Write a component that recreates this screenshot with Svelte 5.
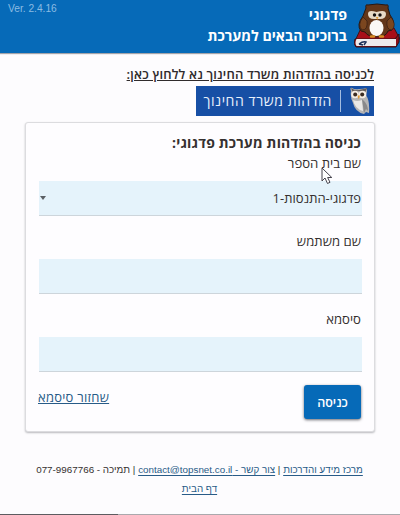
<script>
  let school = $state('פדגוגי-התנסות-1');
  let username = $state('');
  let password = $state('');
</script>

<div class="page" dir="rtl">
  <header>
    <svg class="owl" viewBox="0 0 46 46" width="46" height="46" aria-hidden="true">
      <path d="M7 25 40 25 46 36 1 38Z" fill="#a80f19" stroke="#39151a" />
      <path d="M1 36 41 36 45 31V39L42 44H2Q-1 41 1 36Z" fill="#8f1019" stroke="#311218" />
      <path d="M2.500 36H42V43H2.500Q.5 40 2.500 36Z" fill="#eeebed" />
      <path d="M5 41q4-3 7-2l-2 3M5 41l4 1" fill="none" stroke="#192e57" stroke-width="1.400" />
      <path d="M12 5Q11 1 14 2 23 0 32 2 35 1 34 5L36 12Q42 19 38 27L34 28Q32 34 23 34 14 34 11 29L7 28Q2 22 9 13Z" fill="#633619" stroke="#271712" />
      <path d="M9 14Q3 22 8 27 14 27 13 18ZM37 14Q43 22 38 27 32 27 33 18Z" fill="#7b461f" stroke="#351d13" stroke-width=".7" />
      <path d="M14 11Q14 6 22.500 9 32 6 32 11 32 16 26 16H20Q14 16 14 11Z" fill="#e8d9c7" />
      <ellipse cx="22.500" cy="25" rx="7" ry="8" fill="#faf8f5" />
      <circle cx="20.500" cy="12" r="1.700" fill="#151010" /><circle cx="26" cy="12" r="1.700" fill="#151010" />
      <path d="m22 14 1.200 3 1.200-3Z" fill="#df9a35" />
      <path d="M17 33.500h3M26 33.500h3" stroke="#d78b22" stroke-width="2.500" stroke-linecap="round" />
    </svg>
    <div class="titles">
      <span class="t1">פדגוגי</span>
      <span class="t2">ברוכים הבאים למערכת</span>
    </div>
    <span class="version" dir="ltr">Ver. 2.4.16</span>
  </header>

  <main>
    <a class="intro"><span>לכניסה בהזדהות משרד החינוך נא ללחוץ כאן:</span></a>
    <a class="banner">
      <svg viewBox="0 0 20 28" width="20" height="28" aria-hidden="true">
        <path d="M1 4Q-.5 0 2 1 5 3 9 2 14 2 16 1 18 3 16 8 20 14 19 26L16 25 14 27Q5 25 3 16 0 10 1 4Z" fill="#b6b5b5" />
        <path d="M1 1Q5 4 9 3 14 2 17 1L15 6 9 4 3 6Z" fill="#645d5a" />
        <path d="M3 13Q7 15 12 13L13 24Q5 22 3 13Z" fill="#eae8e6" />
        <path d="M12 12Q18 17 18 24L16 22 14 26Z" fill="#89898b" />
        <circle cx="5" cy="7.500" r="3.800" fill="#f7eee4" /><circle cx="12.500" cy="7.500" r="3.800" fill="#f7eee4" />
        <circle cx="5.200" cy="7.500" r="2" fill="#3b2c22" /><circle cx="12.200" cy="7.500" r="2" fill="#3b2c22" />
        <path d="m7.500 8.500 1.200 4L10 8.500Z" fill="#e49a2e" />
      </svg>
      <i></i>
      <span class="btext">הזדהות משרד החינוך</span>
    </a>

    <form class="card">
      <h2><span>כניסה בהזדהות מערכת פדגוגי:</span></h2>
      <div class="label first"><span>שם בית הספר</span></div>
      <div class="field select"><span>{school}</span><b></b></div>
      <div class="label"><span>שם משתמש</span></div>
      <input class="field" type="text" bind:value={username} />
      <div class="label"><span>סיסמא</span></div>
      <input class="field" type="password" bind:value={password} />
      <div class="actions">
        <button type="button"><span>כניסה</span></button>
        <a class="recover">שחזור סיסמא</a>
      </div>
    </form>
  </main>

  <footer>
    <div class="line"><a>מרכז מידע והדרכות</a> | <a>צור קשר - contact@topsnet.co.il</a> | תמיכה - 077-9967766</div>
    <div class="line"><a>דף הבית</a></div>
  </footer>
  <div class="progress"><i></i></div>

  <svg class="cursor" viewBox="0 0 12 18" width="12" height="18" aria-hidden="true">
    <path d="M1 1V14L4 11 6.500 16.500 9 15.300 6.600 10.500H10.800Z" fill="#fff" stroke="#45434d" />
  </svg>
</div>

<style>
  :global(body) { background: #fdfcfe; }
  .page {
    position: relative;
    box-sizing: border-box;
    width: 400px;
    height: 515px;
    overflow: hidden;
    display: flex;
    flex-direction: column;
    background: #fdfcfe;
    color: #35302f;
    font-family: "Open Sans", "Liberation Sans", sans-serif;
    font-size: 13px;
    white-space: nowrap;
  }
  header {
    box-sizing: border-box;
    height: 53px;
    flex: none;
    display: flex;
    padding: 2px 0 0 8px;
    background: #066ab8;
    box-shadow: 0 1px 1px #a4a4aa;
    color: #fff;
  }
  .owl { flex: none; margin-top: 1px; }
  .titles {
    display: flex;
    flex-direction: column;
    margin-right: 7px;
    font-weight: 700;
    font-size: 14.200px;
    line-height: 21px;
    padding-top: 2px;
  }
  .version {
    margin-right: auto;
    font: 10.200px/13px "Liberation Sans", sans-serif;
    color: #8bbce3;
  }
  main { padding: 0 26px 0 25px; display: flex; flex-direction: column; }
  .intro {
    margin-top: 11px;
    height: 22px;
    line-height: 20px;
    font-weight: 600;
    font-size: 13px;
    letter-spacing: .16px;
    text-decoration: underline;
  }
  .banner {
    width: 178px;
    height: 30px;
    display: flex;
    align-items: center;
    background: #174fa5;
    color: #e8f0fb;
    box-sizing: border-box;
    padding-right: 4px;
    font-size: 14px;
    letter-spacing: .58px;
  }
  .banner i { width: 1px; height: 22px; background: #a3bce0; margin: 0 9px 0 8px; }
  .btext { line-height: 20px; padding-bottom: 1px; }
  .card {
    box-sizing: border-box;
    width: 350px;
    height: 310px;
    margin: 6px -1px 0 0;
    padding: 10px 12px 0;
    border: 1px solid #dcdcdf;
    border-radius: 3px;
    box-shadow: 0 1px 2px #b9b9bd;
    background: #fefdff;
    display: flex;
    flex-direction: column;
  }
  h2 { margin: 0; padding-right: 1px; font-size: 14px; letter-spacing: .2px; line-height: 20px; font-weight: 700; }
  .label { height: 43px; line-height: 50px; box-sizing: border-box; font-size: 13.150px; padding-right: 1px; }
  .label.first { height: 28px; line-height: 20px; }
  .field {
    box-sizing: border-box;
    display: block;
    flex: none;
    width: 323px;
    height: 35px;
    margin: 0;
    padding: 0 1px;
    border: 0;
    border-bottom: 1px solid #cdd5db;
    border-radius: 0;
    background: #e5f3fb;
    outline: none;
  }
  .select { display: flex; justify-content: space-between; align-items: center; }
  .select b { border: 3.500px solid transparent; border-top: 4px solid #5a5f64; border-bottom: 0; }
  .actions { display: flex; justify-content: space-between; padding: 13px 1px 0 0; }
  button {
    width: 57px;
    height: 34px;
    border: 0;
    border-radius: 3px;
    padding: 0;
    background: #066ab8;
    color: #fff;
    font: 600 12.500px "Open Sans", sans-serif;
    box-shadow: 0 1px 3px #68686e;
  }
  a { color: #285b87; text-decoration: underline; }
  .intro { color: #302b2c; }
  .banner { color: #e8f0fb; text-decoration: none; }
  .recover { line-height: 24px; font-size: 13px; letter-spacing: .25px; }
  footer { padding: 28px 37px 0 36px; font-size: 9.830px; font-family: "Liberation Sans", sans-serif; text-align: center; }
  .line { line-height: 19px; }
  .line a { text-underline-offset: 2px; }
  .progress { position: absolute; left: 0; right: 0; bottom: 0; height: 1px; background: #aaa9ad; direction: ltr; }
  .progress i { display: block; width: 118px; height: 1px; background: #5d5c60; }
  .cursor { position: absolute; left: 321px; top: 167px; }
</style>
